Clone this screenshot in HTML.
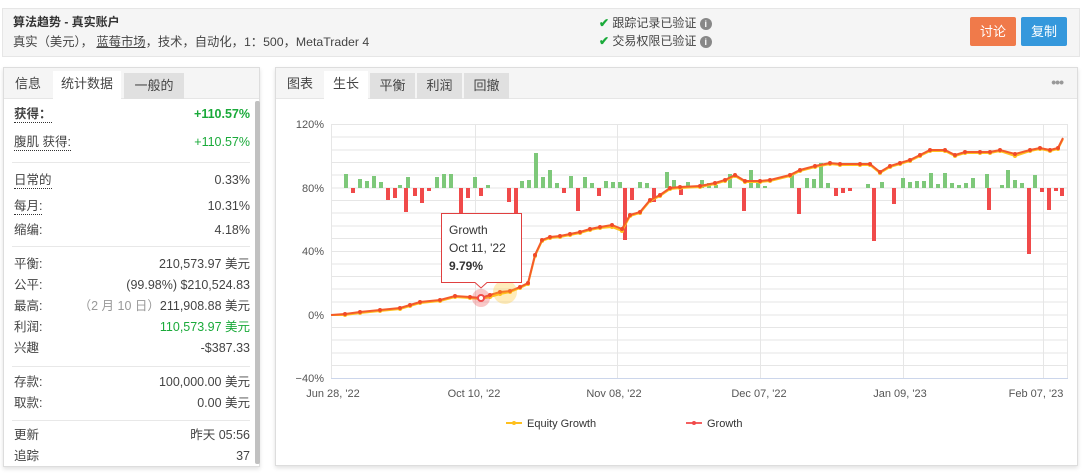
<!DOCTYPE html>
<html><head><meta charset="utf-8"><style>
*{margin:0;padding:0;box-sizing:border-box}
body{width:1089px;height:474px;background:#fff;font-family:"Liberation Sans","Noto Sans CJK SC",sans-serif;color:#333;position:relative;overflow:hidden;font-size:12px}
.abs{position:absolute}
.hdr{left:2px;top:8px;width:1078px;height:49px;background:#f5f5f5;border:1px solid #e6e6e6}
.btn{position:absolute;top:17px;height:29px;color:#fff;font-size:13px;text-align:center;line-height:29px;border-radius:2px}
.panel{background:#fff;border:1px solid #ddd;box-shadow:0 2px 4px rgba(0,0,0,.12)}
.tabs{position:absolute;left:0;top:0;right:0;height:31px;background:#f5f5f5;border-bottom:1px solid #e6e6e6}
.tab{position:absolute;top:5px;height:26px;line-height:26px;font-size:13px;color:#444;text-align:center}
.row{position:absolute;left:10px;width:236px;font-size:12.5px;color:#444;height:16px;line-height:16px}
.row .l{position:absolute;left:0;top:0;line-height:16px}
.row .r{position:absolute;right:0;top:0;line-height:16px}
.u{border-bottom:1px dotted #333}
.sep{position:absolute;left:8px;width:238px;height:1px;background:#e8e8e8}
.g{color:#1aaa3a}
</style></head><body>
<div class="abs hdr">
<div class="abs" style="left:10px;top:4px;font-size:12px;font-weight:bold;color:#333">算法趋势 - 真实账户</div>
<div class="abs" style="left:10px;top:23px;font-size:12.3px;color:#444">真实（美元）， <span style="text-decoration:underline">蓝莓市场</span>，技术，自动化，1：500，MetaTrader 4</div>
<div class="abs" style="left:596px;top:5px;font-size:12px;color:#444"><span style="color:#1aaa3a;font-weight:bold">✔</span> 跟踪记录已验证 <span style="display:inline-block;width:12px;height:12px;border-radius:6px;background:#888;color:#fff;font-size:9px;text-align:center;line-height:12px;font-weight:bold">i</span></div>
<div class="abs" style="left:596px;top:23px;font-size:12px;color:#444"><span style="color:#1aaa3a;font-weight:bold">✔</span> 交易权限已验证 <span style="display:inline-block;width:12px;height:12px;border-radius:6px;background:#888;color:#fff;font-size:9px;text-align:center;line-height:12px;font-weight:bold">i</span></div>
</div>
<div class="btn" style="left:970px;width:46px;background:#f07a4a">讨论</div>
<div class="btn" style="left:1021px;width:46px;background:#3598dc">复制</div>

<div class="abs panel" style="left:3px;top:67px;width:257px;height:400px">
<div class="tabs">
<div class="tab" style="left:0;width:48px;top:3px">信息</div>
<div class="tab" style="left:49px;width:68px;background:#fff;top:3px;height:28px">统计数据</div>
<div class="tab" style="left:120px;width:60px;background:#e0e0e0;top:5px">一般的</div>
</div>
<div class="abs" style="left:251px;top:33px;width:5px;height:363px;background:#c1c1c1;border-radius:2px"></div>
<div class="row" style="top:38px"><span class="l u" style="font-weight:bold">获得：</span><span class="r g" style="font-weight:bold">+110.57%</span></div>
<div class="row" style="top:66px"><span class="l u">腹肌 获得:</span><span class="r g">+110.57%</span></div>
<div class="sep" style="top:94px"></div>
<div class="row" style="top:104px"><span class="l u">日常的</span><span class="r">0.33%</span></div>
<div class="row" style="top:130px"><span class="l u">每月:</span><span class="r">10.31%</span></div>
<div class="row" style="top:154px"><span class="l">缩编:</span><span class="r">4.18%</span></div>
<div class="sep" style="top:178px"></div>
<div class="row" style="top:188px"><span class="l">平衡:</span><span class="r">210,573.97 美元</span></div>
<div class="row" style="top:209px"><span class="l">公平:</span><span class="r">(99.98%) $210,524.83</span></div>
<div class="row" style="top:230px"><span class="l">最高:</span><span class="r"><span style="color:#999">（2 月 10 日）</span>211,908.88 美元</span></div>
<div class="row" style="top:251px"><span class="l">利润:</span><span class="r g">110,573.97 美元</span></div>
<div class="row" style="top:272px"><span class="l">兴趣</span><span class="r">-$387.33</span></div>
<div class="sep" style="top:298px"></div>
<div class="row" style="top:306px"><span class="l">存款:</span><span class="r">100,000.00 美元</span></div>
<div class="row" style="top:327px"><span class="l">取款:</span><span class="r">0.00 美元</span></div>
<div class="sep" style="top:352px"></div>
<div class="row" style="top:359px"><span class="l">更新</span><span class="r">昨天 05:56</span></div>
<div class="row" style="top:380px"><span class="l">追踪</span><span class="r">37</span></div>
</div>

<div class="abs panel" style="left:275px;top:67px;width:803px;height:399px">
<div class="tabs">
<div class="tab" style="left:0;width:48px;top:3px">图表</div>
<div class="tab" style="left:48px;width:44px;background:#fff;top:3px;height:28px">生长</div>
<div class="tab" style="left:94px;width:45px;background:#e0e0e0">平衡</div>
<div class="tab" style="left:141px;width:45px;background:#e0e0e0">利润</div>
<div class="tab" style="left:188px;width:45px;background:#e0e0e0">回撤</div>
<div class="abs" style="right:14px;top:6px;color:#999;font-size:14px;letter-spacing:-1px;font-weight:bold">•••</div>
</div>
</div>

<svg class="abs" style="left:0;top:0" width="1089" height="474">
<defs>
<marker id="my" viewBox="0 0 4 4" refX="2" refY="2" markerWidth="2" markerHeight="2"><circle cx="2" cy="2" r="2" fill="#ffc01e"/></marker>
<marker id="mr" viewBox="0 0 4 4" refX="2" refY="2" markerWidth="2" markerHeight="2"><circle cx="2" cy="2" r="2" fill="#f04a2a"/></marker>
</defs>
<g stroke="#e6e6e6" stroke-width="1">
<line x1="331" y1="124.5" x2="1068" y2="124.5"/><line x1="331" y1="137" x2="1068" y2="137"/><line x1="331" y1="150" x2="1068" y2="150"/><line x1="331" y1="162.5" x2="1068" y2="162.5"/><line x1="331" y1="175" x2="1068" y2="175"/><line x1="331" y1="188" x2="1068" y2="188"/><line x1="331" y1="200.5" x2="1068" y2="200.5"/><line x1="331" y1="213" x2="1068" y2="213"/><line x1="331" y1="226" x2="1068" y2="226"/><line x1="331" y1="238.5" x2="1068" y2="238.5"/><line x1="331" y1="251.5" x2="1068" y2="251.5"/><line x1="331" y1="264" x2="1068" y2="264"/><line x1="331" y1="276.5" x2="1068" y2="276.5"/><line x1="331" y1="289" x2="1068" y2="289"/><line x1="331" y1="302" x2="1068" y2="302"/><line x1="331" y1="315" x2="1068" y2="315"/><line x1="331" y1="327.5" x2="1068" y2="327.5"/><line x1="331" y1="340" x2="1068" y2="340"/><line x1="331" y1="353" x2="1068" y2="353"/><line x1="331" y1="365.5" x2="1068" y2="365.5"/>
<line x1="331.5" y1="124" x2="331.5" y2="378"/><line x1="475.5" y1="124" x2="475.5" y2="378"/><line x1="617.5" y1="124" x2="617.5" y2="378"/><line x1="760.5" y1="124" x2="760.5" y2="378"/><line x1="903.5" y1="124" x2="903.5" y2="378"/><line x1="1043.5" y1="124" x2="1043.5" y2="378"/><line x1="1067.5" y1="124" x2="1067.5" y2="378"/>
</g>
<line x1="331" y1="378.5" x2="1068" y2="378.5" stroke="#ccd6eb"/>
<g font-size="11" fill="#555" text-anchor="end" font-family="Liberation Sans,sans-serif">
<text x="324" y="128">120%</text><text x="324" y="192">80%</text><text x="324" y="255">40%</text><text x="324" y="319">0%</text><text x="324" y="382">−40%</text>
</g>
<g font-size="11" fill="#555" text-anchor="middle" font-family="Liberation Sans,sans-serif">
<text x="333" y="397">Jun 28, '22</text><text x="474" y="397">Oct 10, '22</text><text x="614" y="397">Nov 08, '22</text><text x="759" y="397">Dec 07, '22</text><text x="900" y="397">Jan 09, '23</text><text x="1036" y="397">Feb 07, '23</text>
</g>
<g fill="#7ec87a">
<rect x="344" y="174" width="4" height="14"/><rect x="358" y="179" width="4" height="9"/><rect x="365" y="181" width="4" height="7"/><rect x="372" y="176" width="4" height="12"/><rect x="379" y="182" width="4" height="6"/><rect x="398" y="185" width="4" height="3"/><rect x="406" y="177" width="4" height="11"/><rect x="435" y="177" width="4" height="11"/><rect x="442" y="174" width="4" height="14"/><rect x="449" y="174" width="4" height="14"/><rect x="486" y="185" width="4" height="3"/><rect x="473" y="177" width="4" height="11"/><rect x="520" y="181" width="4" height="7"/><rect x="527" y="180" width="4" height="8"/><rect x="534" y="153" width="4" height="35"/><rect x="541" y="177" width="4" height="11"/><rect x="548" y="170" width="4" height="18"/><rect x="555" y="183" width="4" height="5"/><rect x="569" y="176" width="4" height="12"/><rect x="583" y="177" width="4" height="11"/><rect x="590" y="183" width="4" height="5"/><rect x="604" y="181" width="4" height="7"/><rect x="611" y="182" width="4" height="6"/><rect x="618" y="182" width="4" height="6"/><rect x="638" y="182" width="4" height="6"/><rect x="645" y="183" width="4" height="5"/><rect x="665" y="172" width="4" height="16"/><rect x="672" y="180" width="4" height="8"/><rect x="686" y="182" width="4" height="6"/><rect x="700" y="180" width="4" height="8"/><rect x="707" y="183" width="4" height="5"/><rect x="714" y="185" width="4" height="3"/><rect x="728" y="174" width="4" height="14"/><rect x="749" y="170" width="4" height="18"/><rect x="756" y="182" width="4" height="6"/><rect x="763" y="186" width="4" height="2"/><rect x="790" y="174" width="4" height="14"/><rect x="805" y="178" width="4" height="10"/><rect x="812" y="179" width="4" height="9"/><rect x="819" y="163" width="4" height="25"/><rect x="826" y="183" width="4" height="5"/><rect x="866" y="184" width="4" height="4"/><rect x="880" y="182" width="4" height="6"/><rect x="901" y="178" width="4" height="10"/><rect x="908" y="182" width="4" height="6"/><rect x="915" y="181" width="4" height="7"/><rect x="922" y="181" width="4" height="7"/><rect x="929" y="173" width="4" height="15"/><rect x="936" y="184" width="4" height="4"/><rect x="943" y="173" width="4" height="15"/><rect x="950" y="183" width="4" height="5"/><rect x="957" y="185" width="4" height="3"/><rect x="964" y="183" width="4" height="5"/><rect x="971" y="178" width="4" height="10"/><rect x="985" y="174" width="4" height="14"/><rect x="1006" y="170" width="4" height="18"/><rect x="1013" y="180" width="4" height="8"/><rect x="1020" y="183" width="4" height="5"/><rect x="1033" y="175" width="4" height="13"/><rect x="1000" y="185" width="4" height="3"/>
</g>
<g fill="#f04a4a">
<rect x="351" y="188" width="4" height="5"/><rect x="386" y="188" width="4" height="12"/><rect x="393" y="188" width="4" height="10"/><rect x="404" y="188" width="4" height="24"/><rect x="413" y="188" width="4" height="8"/><rect x="420" y="188" width="4" height="15"/><rect x="427" y="188" width="4" height="3"/><rect x="459" y="188" width="4" height="28"/><rect x="466" y="188" width="4" height="10"/><rect x="479" y="188" width="4" height="8"/><rect x="507" y="188" width="4" height="14"/><rect x="514" y="188" width="4" height="30"/><rect x="562" y="188" width="4" height="5"/><rect x="576" y="188" width="4" height="23"/><rect x="597" y="188" width="4" height="8"/><rect x="623" y="188" width="4" height="52"/><rect x="630" y="188" width="4" height="12"/><rect x="652" y="188" width="4" height="14"/><rect x="679" y="188" width="4" height="7"/><rect x="742" y="188" width="4" height="23"/><rect x="797" y="188" width="4" height="26"/><rect x="834" y="188" width="4" height="8"/><rect x="841" y="188" width="4" height="5"/><rect x="848" y="188" width="4" height="3"/><rect x="872" y="188" width="4" height="53"/><rect x="892" y="188" width="4" height="16"/><rect x="987" y="188" width="4" height="22"/><rect x="1027" y="188" width="4" height="66"/><rect x="1040" y="188" width="4" height="4"/><rect x="1047" y="188" width="4" height="22"/><rect x="1054" y="188" width="4" height="3"/><rect x="1060" y="188" width="4" height="8"/>
</g>
<polyline fill="none" stroke="#ffc01e" stroke-width="2" marker-mid="url(#my)" points="331,315 345,315 360,313 380,311 400,309 410,306 420,303 440,301 455,297 470,298 481,299 490,297 500,294 510,292 520,288 528,284 535,256 542,241 550,238 560,237 570,235 580,233 590,230 600,228 612,227 622,231 630,216 640,213 650,201 660,196 670,189 680,188 700,187 715,184 725,181 735,176 745,182 760,182 770,181 790,176 800,171 815,167 830,164 840,165 860,165 870,165 880,173 890,167 900,164 910,161 920,156 930,151 945,151 955,156 965,153 980,153 990,153 1000,151 1015,156 1030,151 1040,149 1050,151 1058,149 1063,139"/>
<polyline fill="none" stroke="#f45b2a" stroke-width="2" marker-mid="url(#mr)" points="331,315 345,314 360,312 380,310 400,308 410,305 420,302 440,300 455,296 470,297 481,298 490,295 500,292 510,291 520,287 528,283 535,255 542,240 550,237 560,236 570,234 580,232 590,229 600,227 612,225 622,229 630,215 640,212 650,200 660,195 670,188 680,187 700,186 715,183 725,180 735,175 745,181 760,181 770,180 790,175 800,170 815,166 830,163 840,164 860,164 870,164 880,172 890,166 900,163 910,160 920,155 930,150 945,150 955,155 965,152 980,152 990,152 1000,150 1015,154 1030,150 1040,148 1050,150 1058,148 1063,138"/>
<circle cx="505" cy="292" r="12" fill="#ffc01e" opacity=".3"/>
<circle cx="481" cy="298" r="9" fill="#f04a4a" opacity=".3"/>
<circle cx="481" cy="298" r="3" fill="#fff" stroke="#f04a4a" stroke-width="2"/>
<path d="M441.5,213.5 H521.5 V282.5 H487 L481,288 L475,282.5 H441.5 Z" fill="#fff" stroke="#e04040" stroke-width="1"/>
<text x="449" y="234" font-size="12" fill="#333" font-family="Liberation Sans,sans-serif">Growth</text>
<text x="449" y="252" font-size="12" fill="#333" font-family="Liberation Sans,sans-serif">Oct 11, '22</text>
<text x="449" y="270" font-size="12" fill="#333" font-weight="bold" font-family="Liberation Sans,sans-serif">9.79%</text>
<line x1="506" y1="423" x2="522" y2="423" stroke="#ffc01e" stroke-width="2"/><circle cx="514" cy="423" r="2" fill="#ffc01e"/>
<text x="527" y="427" font-size="11" fill="#333" font-family="Liberation Sans,sans-serif">Equity Growth</text>
<line x1="686" y1="423" x2="702" y2="423" stroke="#f46060" stroke-width="2"/><circle cx="694" cy="423" r="2" fill="#f04a4a"/>
<text x="707" y="427" font-size="11" fill="#333" font-family="Liberation Sans,sans-serif">Growth</text>
</svg>
</body></html>
